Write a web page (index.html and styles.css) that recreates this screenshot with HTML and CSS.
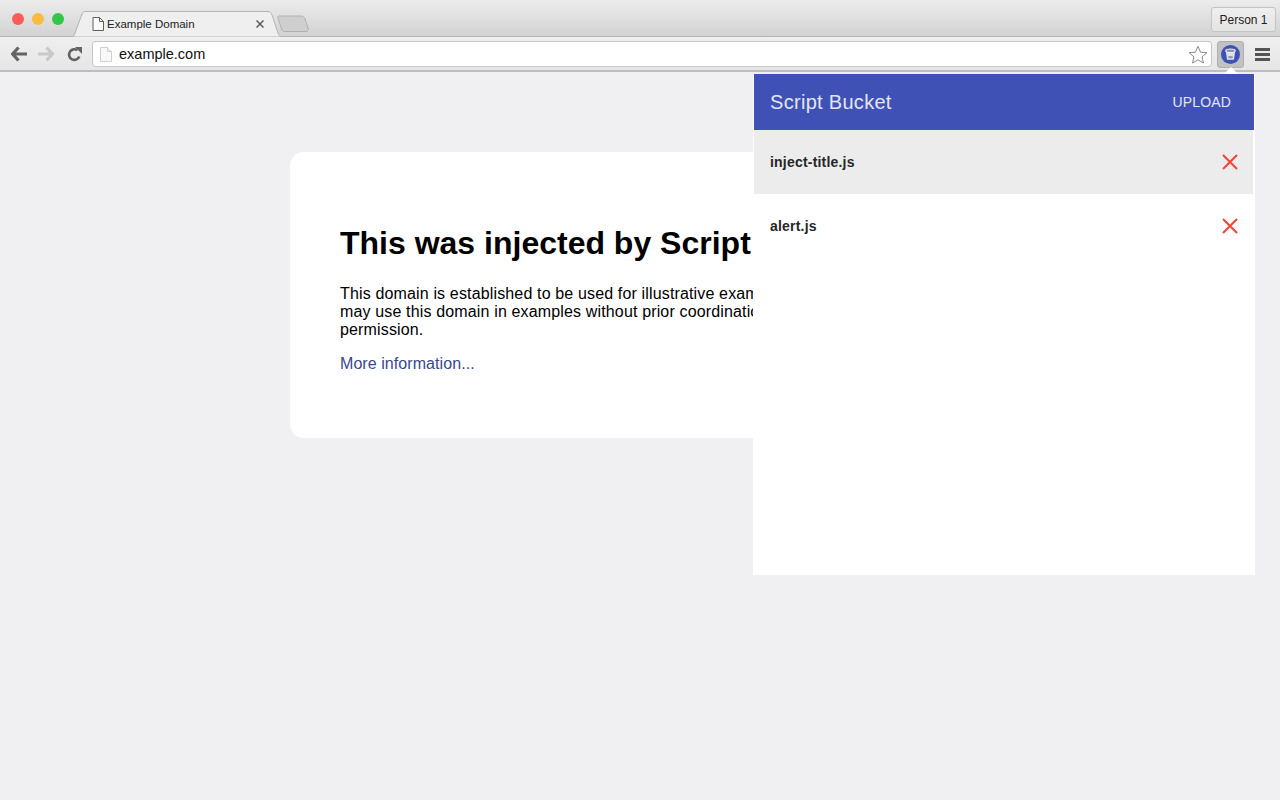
FILE: index.html
```html
<!DOCTYPE html>
<html lang="en">
<head>
<meta charset="utf-8">
<title>Example Domain</title>
<link rel="stylesheet" href="styles.css">
</head>
<body>
<header class="chrome">
  <div class="tabstrip">
    <div class="lights">
      <span class="light light-red"></span>
      <span class="light light-yellow"></span>
      <span class="light light-green"></span>
    </div>
    <div class="tab">
      <svg class="tab-shape" width="208" height="26" viewBox="0 0 208 26"><path d="M0 25.500C1 25 1.500 24 2 22L9 3C10 1 11 .5 13 .5H195C197 .5 198.500 2 199 4L205 22C205.500 24 206.500 25.500 208 25.500" fill="#efefef" stroke="#b3b3b3"/></svg>
      <svg class="tab-icon" width="12" height="14" viewBox="0 0 12 14"><path d="M1 .5H7.500L11.500 4.500V13.500H1Z M7.500 .5V4.500H11.500" fill="#fbfbfb" stroke="#5f5f5f"/></svg>
      <span class="tab-title">Example Domain</span>
      <svg class="tab-close" width="8" height="8" viewBox="0 0 8 8"><path d="M.5 .5L7.500 7.500M7.500 .5L.5 7.500" stroke="#5a5a5a" stroke-width="1.500"/></svg>
    </div>
    <svg class="newtab" width="34" height="18" viewBox="0 0 34 18"><path d="M2 1H24C26 1 27 2 28 4L31 13C32 15 31 16.500 29 16.500H8C6 16.500 5 15.500 4.500 14L1 3C.7 1.800 1 1 2 1Z" fill="#cfcfcf" stroke="#b0b0b0"/></svg>
    <div class="spacer"></div>
    <button class="person">Person 1</button>
  </div>
  <div class="toolbar">
    <svg class="nav-icon" width="18" height="16" viewBox="0 0 18 16"><path d="M8.500 1.500L2.500 8L8.500 14.500M3 8H17" fill="none" stroke="#636363" stroke-width="3.200" stroke-linejoin="round"/></svg>
    <svg class="nav-icon nav-forward" width="18" height="16" viewBox="0 0 18 16"><path d="M9.500 1.500L15.500 8L9.500 14.500M15 8H1" fill="none" stroke="#c9c9c9" stroke-width="3.200" stroke-linejoin="round"/></svg>
    <svg class="nav-icon nav-reload" width="15" height="15" viewBox="0 0 15 15"><path d="M12.300 9.500A5.300 5.300 0 1 1 10.500 3.300" fill="none" stroke="#636363" stroke-width="2.600"/><path d="M8 0H15V7Z" fill="#636363"/></svg>
    <div class="omnibox">
      <svg class="omni-page" width="12" height="15" viewBox="0 0 12 15"><path d="M.5 .5H7.500L11.500 4.500V14.500H.5Z" fill="#f8f8f8" stroke="#d0d0d0"/><path d="M7.500 .5V4.500H11.500" fill="#ececec" stroke="#d0d0d0"/></svg>
      <span class="url">example.com</span>
      <svg class="star" width="20" height="19" viewBox="0 0 20 19"><path d="M10 1.300L12.500 7.200L18.900 7.700L14 11.900L15.500 18L10 14.800L4.500 18L6 11.900L1.100 7.700L7.500 7.200Z" fill="#fff" stroke="#8b8b8b"/></svg>
    </div>
    <div class="ext-btn">
      <svg width="19" height="19" viewBox="0 0 18 18"><circle cx="9" cy="9" r="9" fill="#3f51b5"/><path d="M4.500 5.500H13.500L12.300 14H5.700Z" fill="#dcdfe8"/><ellipse cx="9" cy="5.500" rx="4.500" ry="1.700" fill="#8d93a8" stroke="#eceef3"/><path d="M7 10.500H11V12.500H7Z" fill="#8d93a8"/></svg>
    </div>
    <div class="menu"><span></span><span></span><span></span></div>
  </div>
</header>
<main class="page">
  <section class="card">
    <h1 class="card-title">This was injected by Script Bucket!</h1>
    <p class="card-text">This domain is established to be used for illustrative examples in documents. You<br>may use this domain in examples without prior coordination or asking for<br>permission.</p>
    <p class="card-text"><a class="card-link" href="#">More information...</a></p>
  </section>
</main>
<aside class="popup">
  <div class="popup-head">
    <span class="popup-title">Script Bucket</span>
    <span class="popup-upload">UPLOAD</span>
  </div>
  <div class="row row-active">
    <span class="row-name">inject-title.js</span>
    <svg width="16" height="16" viewBox="0 0 16 16"><path d="M1 1L15 15M15 1L1 15" stroke="#f44336" stroke-width="2"/></svg>
  </div>
  <div class="row">
    <span class="row-name">alert.js</span>
    <svg width="16" height="16" viewBox="0 0 16 16"><path d="M1 1L15 15M15 1L1 15" stroke="#f44336" stroke-width="2"/></svg>
  </div>
</aside>
<div class="popup-arrow"></div>
</body>
</html>
```
FILE: styles.css
```css
* { box-sizing: border-box; }
html, body { margin: 0; height: 100%; }
body {
  background: #f0f0f2;
  font-family: "Liberation Sans", Arial, sans-serif;
  overflow: hidden;
}
.chrome { height: 72px; }
.tabstrip {
  height: 37px;
  display: flex;
  align-items: flex-start;
  background: linear-gradient(#ececec, #d2d2d2);
  border-bottom: 1px solid #b4b4b4;
}
.lights { display: flex; gap: 8px; padding: 13px 0 0 12px; }
.light { width: 12px; height: 12px; border-radius: 50%; }
.light-red { background: #fc5b57; }
.light-yellow { background: #fdbc40; }
.light-green { background: #33c748; }
.tab {
  position: relative;
  width: 208px;
  height: 26px;
  margin: 11px 0 0 9px;
  display: flex;
  align-items: center;
  padding: 0 17px 0 19px;
  font-size: 11.5px;
  color: #222;
}
.tab-shape { position: absolute; left: 0; top: 0; }
.tab-icon, .tab-title, .tab-close { position: relative; }
.tab-icon { margin-right: 3px; }
.tab-title { flex: 1; }
.newtab { margin: 15px 0 0 -4px; }
.spacer { flex: 1; }
.person {
  width: 65px;
  height: 25px;
  margin: 7px 4px 0 0;
  padding: 0;
  background: linear-gradient(#efefef, #e4e4e4);
  border: 1px solid #c4c4c4;
  border-radius: 3px;
  font: 12px "Liberation Sans", Arial, sans-serif;
  color: #222;
}
.toolbar {
  height: 35px;
  display: flex;
  align-items: center;
  padding: 1px 10px 0 10px;
  background: linear-gradient(#efefef, #e6e6e6);
  border-bottom: 2px solid #bdbdbd;
}
.nav-forward { margin-left: 9px; }
.nav-reload { margin-left: 12px; }
.omnibox {
  display: flex;
  align-items: center;
  width: 1120px;
  height: 26px;
  margin-left: 10px;
  padding: 0 3px 0 7px;
  background: #fff;
  border: 1px solid #c6c6c6;
  border-radius: 3px;
}
.omni-page { margin-right: 7px; }
.url { flex: 1; font-size: 14.5px; color: #111; }
.ext-btn {
  width: 27px;
  height: 27px;
  margin-left: 5px;
  display: flex;
  align-items: center;
  justify-content: center;
  background: #c2c2c4;
  border: 1px solid #b0b0b0;
  border-radius: 3px;
}
.menu {
  display: flex;
  flex-direction: column;
  gap: 2px;
  margin-left: 11px;
}
.menu span { display: block; width: 15px; height: 3px; background: #555; }
.page { padding-top: 80px; }
.card {
  width: 700px;
  height: 286px;
  margin: 0 auto;
  padding: 50px;
  background: #fff;
  border-radius: 14px;
}
.card-title {
  margin: 23px 0 0;
  font-size: 32px;
  line-height: 37px;
  color: #000;
}
.card-text {
  margin: 16px 0 0;
  font-size: 16px;
  line-height: 18px;
  letter-spacing: .15px;
  color: #000;
}
.card-title + .card-text { margin-top: 23px; }
.card-link { color: #38488f; text-decoration: none; letter-spacing: .07px; }
.popup {
  position: absolute;
  left: 753px;
  top: 74px;
  width: 502px;
  height: 501px;
  padding: 0 1px;
  background: #fff;
}
.popup-head {
  height: 56px;
  display: flex;
  align-items: center;
  justify-content: space-between;
  padding: 0 23px 0 16px;
  background: #3f51b5;
  color: #e3e5f3;
}
.popup-title { font-size: 20px; letter-spacing: .3px; }
.popup-upload { font-size: 14px; letter-spacing: .15px; }
.row {
  height: 64px;
  display: flex;
  align-items: center;
  justify-content: space-between;
  padding: 0 16px;
}
.row-active { background: #ececec; margin-right: 1px; padding-right: 15px; }
.row-name { font-size: 14px; font-weight: bold; color: #262626; letter-spacing: .2px; }
.popup-arrow {
  position: absolute;
  left: 1224px;
  top: 67px;
  width: 0;
  height: 0;
  border-left: 7px solid transparent;
  border-right: 7px solid transparent;
  border-bottom: 7px solid #fff;
}
```
